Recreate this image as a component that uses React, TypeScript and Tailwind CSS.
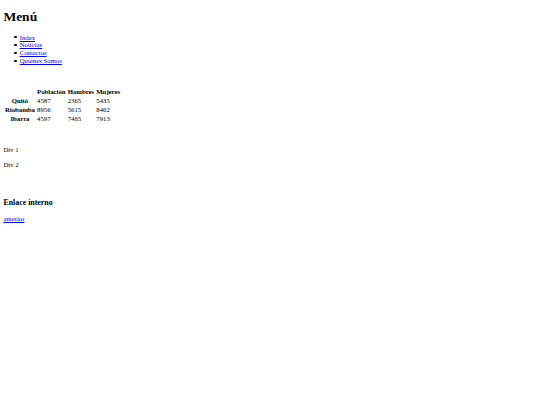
import React from 'react';

const rows = [
  { city: 'Quitó', total: '4587', men: '2365', women: '5435' },
  { city: 'Riobamba', total: '8956', men: '5615', women: '8462' },
  { city: 'Ibarra', total: '4597', men: '7465', women: '7913' },
];

const links = ['Index', 'Noticias', 'Contactos', 'Quienes Somos'];

const App: React.FC = () => {
  return (
    <div className="min-h-screen bg-white px-[3.4px] pb-[3.4px] font-['Liberation_Serif',serif] text-[6.75px] leading-[1.15] text-black">
      <h1 className="pt-[9px] text-[13.5px] font-bold leading-[1.15]">Menú</h1>

      <ul className="mt-[9px] pl-[16.6px]">
        {links.map(l => (
          <li key={l} className="flex items-center">
            <span className="-ml-[5.5px] mr-[3px] inline-block h-[2.2px] w-[2.2px] rounded-full bg-black"></span>
            <a href="#" className="text-[#0000ee] underline">{l}</a>
          </li>
        ))}
      </ul>

      {/* tabla de poblacion */}
      <table className="mt-[23px] border-separate border-spacing-x-[1px] border-spacing-y-[0.84px]">
        <thead>
          <tr>
            <th className="p-[0.55px]"></th>
            <th className="p-[0.55px] font-bold">Población</th>
            <th className="p-[0.55px] font-bold">Hombres</th>
            <th className="p-[0.55px] font-bold">Mujeres</th>
          </tr>
        </thead>
        <tbody>
          {rows.map(r => (
            <tr key={r.city}>
              <th className="p-[0.55px] font-bold">{r.city}</th>
              <td className="p-[0.55px]">{r.total}</td>
              <td className="p-[0.55px]">{r.men}</td>
              <td className="p-[0.55px]">{r.women}</td>
            </tr>
          ))}
        </tbody>
      </table>

      <p className="mt-[23px]">Div 1</p>
      <p className="mt-[7.75px]">Div 2</p>

      <h3 className="mt-[28.5px] text-[7.9px] font-bold leading-[1.15]">Enlace interno</h3>
      <p className="mt-[8.2px]"><a href="#" className="text-[#0000ee] underline">anterior</a></p>
    </div>
  );
};

export default App;
